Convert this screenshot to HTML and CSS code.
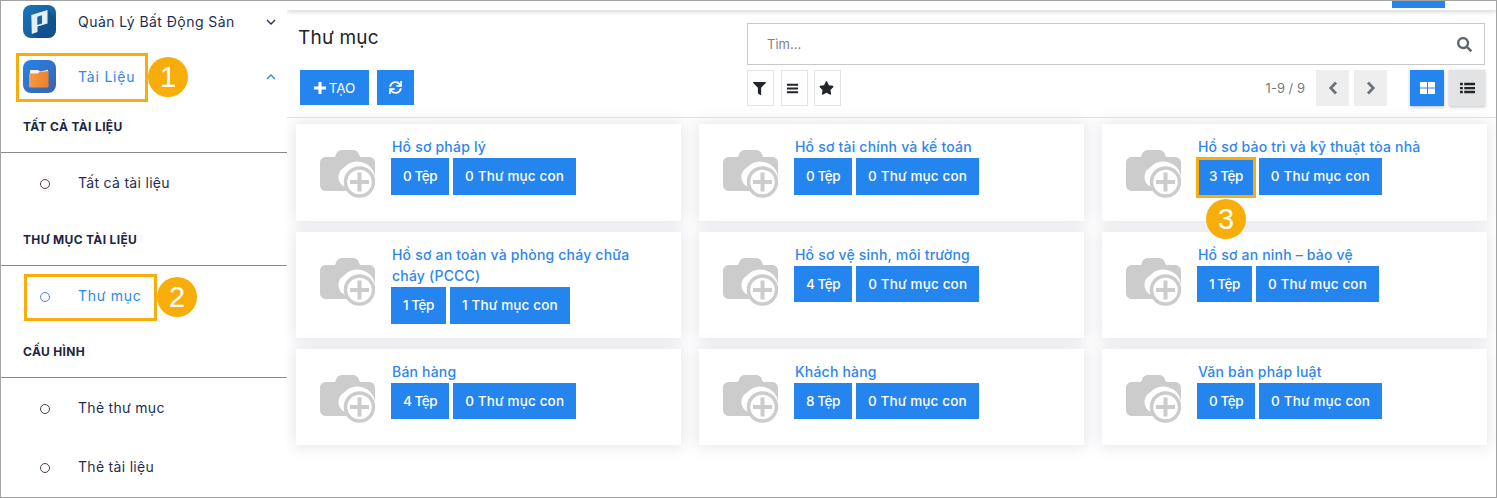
FILE: index.html
```html
<!DOCTYPE html>
<html lang="vi">
<head>
<meta charset="utf-8">
<title>Thư mục</title>
<link rel="stylesheet" href="styles.css">
</head>
<body>
<svg class="defs" width="0" height="0" aria-hidden="true">
  <symbol id="camera" viewBox="0 0 55 48">
    <path fill="#cccccc" d="M16 4.500C17 1.500 19 0 22 0h11c3 0 5 1.500 6 4.500L40 7h9c3.500 0 6 2.500 6 6v13a18 18 0 0 0-31-8.500A11 11 0 0 0 28.500 38a18 18 0 0 0 .3 3H6c-3.500 0-6-2.500-6-6V13c0-3.500 2.500-6 6-6h9z"/>
    <circle cx="39.500" cy="32" r="14" fill="#fff" stroke="#cccccc" stroke-width="3.500"/>
    <rect x="37.500" y="22.500" width="4" height="19" fill="#cccccc"/>
    <rect x="30" y="30" width="19" height="4" fill="#cccccc"/>
  </symbol>
  <symbol id="i-search" viewBox="0 0 512 512"><path d="M505 442.700L405.300 343c-4.500-4.500-10.600-7-17-7H372c27.600-35.300 44-79.700 44-128C416 93.100 322.900 0 208 0S0 93.100 0 208s93.100 208 208 208c48.300 0 92.700-16.400 128-44v16.300c0 6.400 2.500 12.500 7 17l99.700 99.700c9.400 9.400 24.600 9.400 33.900 0l28.300-28.300c9.400-9.400 9.400-24.600.1-34zM208 336c-70.700 0-128-57.200-128-128 0-70.700 57.200-128 128-128 70.700 0 128 57.200 128 128 0 70.700-57.200 128-128 128z"/></symbol>
  <symbol id="i-sync" viewBox="0 0 512 512"><path d="M440.650 12.570l4 82.770A247.160 247.160 0 0 0 255.830 8C134.730 8 33.910 94.920 12.290 209.820A12 12 0 0 0 24.090 224h49.050a12 12 0 0 0 11.670-9.260 175.910 175.910 0 0 1 317-56.940l-101.460-4.860a12 12 0 0 0-12.570 12v47.410a12 12 0 0 0 12 12H500a12 12 0 0 0 12-12V12a12 12 0 0 0-12-12h-47.370a12 12 0 0 0-11.980 12.570zM255.830 432a175.610 175.610 0 0 1-146-77.800l101.800 4.870a12 12 0 0 0 12.570-12v-47.400a12 12 0 0 0-12-12H12a12 12 0 0 0-12 12V500a12 12 0 0 0 12 12h47.350a12 12 0 0 0 12-12.600l-4.150-82.570A247.170 247.170 0 0 0 255.830 504c121.110 0 221.930-86.920 243.550-201.820a12 12 0 0 0-11.800-14.180h-49.050a12 12 0 0 0-11.670 9.260A175.860 175.860 0 0 1 255.830 432z"/></symbol>
  <symbol id="i-filter" viewBox="0 0 512 512"><path d="M487.976 0H24.028C2.710 0-8.047 25.866 7.058 40.971L192 225.941V432c0 7.831 3.821 15.170 10.237 19.662l80 55.980C298.020 518.690 320 507.493 320 487.980V225.941l184.947-184.970C520.021 25.896 509.338 0 487.976 0z"/></symbol>
  <symbol id="i-star" viewBox="0 0 576 512"><path d="M259.300 17.800L194 150.200 47.900 171.500c-26.200 3.800-36.700 36.100-17.700 54.600l105.700 103-25 145.500c-4.500 26.300 23.200 46 46.400 33.700L288 439.600l130.700 68.700c23.200 12.200 50.900-7.400 46.400-33.700l-25-145.500 105.700-103c19-18.500 8.500-50.800-17.700-54.600L382 150.200 316.700 17.800c-11.700-23.600-45.600-23.900-57.400 0z"/></symbol>
</svg>

<div class="frame">
  <aside class="sidebar">
    <a class="app">
      <svg class="app-icon" viewBox="0 0 33 33">
        <defs><linearGradient id="g1" x1="0" y1="0" x2="1" y2="1"><stop offset="0" stop-color="#1878bb"/><stop offset="1" stop-color="#12508e"/></linearGradient></defs>
        <rect width="33" height="33" rx="8" fill="url(#g1)"/>
        <path fill="#0f4a82" opacity=".55" d="M24.500 5L33 14v11a8 8 0 0 1-8 8H14L9 29l7-8 8-3z"/>
        <path fill="#e6eef5" fill-rule="evenodd" d="M8.300 10L24.500 5v13.500L14.500 21.500V27L8.800 29zM14.300 11.800V20L19 18.500V10.300z"/>
      </svg>
      <span class="app-label">Quản Lý Bất Động Sản</span>
      <svg class="chev" viewBox="0 0 10 6"><path d="M1 1l4 4 4-4" fill="none" stroke="#1f2d50" stroke-width="1.300"/></svg>
    </a>
    <a class="app app-active">
      <svg class="app-icon" viewBox="0 0 33 33">
        <defs>
          <linearGradient id="g2" x1="0" y1="0" x2="1" y2="1"><stop offset="0" stop-color="#2583ee"/><stop offset="1" stop-color="#3d62a6"/></linearGradient>
          <linearGradient id="g3" x1="0" y1="0" x2="1" y2="0"><stop offset="0" stop-color="#f59a45"/><stop offset="1" stop-color="#ee7f2e"/></linearGradient>
        </defs>
        <rect width="33" height="33" rx="8" fill="url(#g2)"/>
        <path fill="#f7f1e6" d="M7 12V10h8l2 1.500 8-1.700V14H7z"/>
        <path fill="url(#g3)" d="M6 13.500h8.500l2-1.500 9-1V26a1.500 1.500 0 0 1-1.500 1.500H7.500A1.500 1.500 0 0 1 6 26z"/>
      </svg>
      <span class="app-label">Tài Liệu</span>
      <svg class="chev" viewBox="0 0 10 6"><path d="M1 5l4-4 4 4" fill="none" stroke="#2e86ee" stroke-width="1.300"/></svg>
    </a>

    <h3 class="sec-title sec-first">TẤT CẢ TÀI LIỆU</h3>
    <a class="item"><i class="dot"></i>Tất cả tài liệu</a>

    <h3 class="sec-title">THƯ MỤC TÀI LIỆU</h3>
    <a class="item item-active"><i class="dot"></i>Thư mục</a>

    <h3 class="sec-title">CẤU HÌNH</h3>
    <a class="item"><i class="dot"></i>Thẻ thư mục</a>
    <a class="item"><i class="dot"></i>Thẻ tài liệu</a>
  </aside>

  <main class="main">
    <div class="topstrip"><span class="toptab"></span></div>
    <section class="panel">
      <h1 class="page-title">Thư mục</h1>
      <div class="search">
        <span class="search-ph">Tìm...</span>
        <svg class="search-icon"><use href="#i-search"/></svg>
      </div>
      <div class="actions">
        <button class="btn btn-create"><svg class="plus" viewBox="0 0 12 12"><path d="M4.500 0h3v4.500H12v3H7.500V12h-3V7.500H0v-3h4.500z"/></svg>TẠO</button>
        <button class="btn btn-sync"><svg class="sync"><use href="#i-sync"/></svg></button>
      </div>
      <div class="tools">
        <button class="tool"><svg class="ti"><use href="#i-filter"/></svg></button>
        <button class="tool"><svg class="ti" viewBox="0 0 14 12"><path d="M1 1h12v2H1zM1 5h12v2H1zM1 9h12v2H1z"/></svg></button>
        <button class="tool"><svg class="ti ti-star"><use href="#i-star"/></svg></button>
        <span class="pager-text">1-9 / 9</span>
        <button class="pager"><svg viewBox="0 0 10 14" class="pi"><path d="M8 1.500L2.800 7 8 12.500" fill="none" stroke="#6c757d" stroke-width="2.800"/></svg></button>
        <button class="pager"><svg viewBox="0 0 10 14" class="pi"><path d="M2 1.500L7.200 7 2 12.500" fill="none" stroke="#6c757d" stroke-width="2.800"/></svg></button>
        <button class="view view-on"><svg viewBox="0 0 15 12" class="vi"><path fill="#fff" d="M0 0h7v5.500H0zM8 0h7v5.500H8zM0 6.500h7V12H0zM8 6.500h7V12H8z"/></svg></button>
        <button class="view"><svg viewBox="0 0 16 12" class="vi"><path fill="#212529" d="M0 .500h3v2.500H0zM4.500 .500H16v2.500H4.500zM0 4.800h3v2.500H0zM4.500 4.800H16v2.500H4.500zM0 9h3v2.500H0zM4.500 9H16v2.500H4.500z"/></svg></button>
      </div>
    </section>

    <section class="cards">
      <article class="card"><svg class="thumb"><use href="#camera"/></svg><div class="card-body"><a class="card-title">Hồ sơ pháp lý</a><div class="card-btns"><span class="stat">0 Tệp</span><span class="stat">0 Thư mục con</span></div></div></article>
      <article class="card"><svg class="thumb"><use href="#camera"/></svg><div class="card-body"><a class="card-title">Hồ sơ tài chính và kế toán</a><div class="card-btns"><span class="stat">0 Tệp</span><span class="stat">0 Thư mục con</span></div></div></article>
      <article class="card"><svg class="thumb"><use href="#camera"/></svg><div class="card-body"><a class="card-title">Hồ sơ bảo trì và kỹ thuật tòa nhà</a><div class="card-btns"><span class="stat">3 Tệp</span><span class="stat">0 Thư mục con</span></div></div></article>
      <article class="card"><svg class="thumb"><use href="#camera"/></svg><div class="card-body"><a class="card-title">Hồ sơ an toàn và phòng cháy chữa cháy (PCCC)</a><div class="card-btns"><span class="stat">1 Tệp</span><span class="stat">1 Thư mục con</span></div></div></article>
      <article class="card"><svg class="thumb"><use href="#camera"/></svg><div class="card-body"><a class="card-title">Hồ sơ vệ sinh, môi trường</a><div class="card-btns"><span class="stat">4 Tệp</span><span class="stat">0 Thư mục con</span></div></div></article>
      <article class="card"><svg class="thumb"><use href="#camera"/></svg><div class="card-body"><a class="card-title">Hồ sơ an ninh – bảo vệ</a><div class="card-btns"><span class="stat">1 Tệp</span><span class="stat">0 Thư mục con</span></div></div></article>
      <article class="card"><svg class="thumb"><use href="#camera"/></svg><div class="card-body"><a class="card-title">Bán hàng</a><div class="card-btns"><span class="stat">4 Tệp</span><span class="stat">0 Thư mục con</span></div></div></article>
      <article class="card"><svg class="thumb"><use href="#camera"/></svg><div class="card-body"><a class="card-title">Khách hàng</a><div class="card-btns"><span class="stat">8 Tệp</span><span class="stat">0 Thư mục con</span></div></div></article>
      <article class="card"><svg class="thumb"><use href="#camera"/></svg><div class="card-body"><a class="card-title">Văn bản pháp luật</a><div class="card-btns"><span class="stat">0 Tệp</span><span class="stat">0 Thư mục con</span></div></div></article>
    </section>
  </main>

  <div class="mark mark-box mark-box-1"></div>
  <div class="mark mark-num mark-num-1">1</div>
  <div class="mark mark-box mark-box-2"></div>
  <div class="mark mark-num mark-num-2">2</div>
  <div class="mark mark-box mark-box-3"></div>
  <div class="mark mark-num mark-num-3">3</div>
</div>
</body>
</html>
```

FILE: styles.css
```css
* { box-sizing: border-box; }
html, body { margin: 0; padding: 0; background: #fff; }
body { font-family: Inter, "Liberation Sans", sans-serif; color: #212529; overflow: hidden; }
.defs { position: absolute; }
a { display: block; }
button { font-family: inherit; padding: 0; cursor: pointer; }

.frame {
  position: relative;
  width: 1497px;
  height: 498px;
  border: 1px solid #a3a3a3;
  display: flex;
  overflow: hidden;
  background: #fff;
}

/* Sidebar */
.sidebar {
  width: 286px;
  flex: none;
  background: #fff;
  position: relative;
  z-index: 2;
  margin-top: -7px;
}
.app {
  height: 55px;
  display: flex;
  align-items: center;
  padding-left: 22px;
  padding-right: 10px;
  font-size: 14px;
  color: #1f2d50;
}
.app-label { margin-left: 22px; flex: 1; letter-spacing: .45px; }
.app-active .app-label { letter-spacing: .8px; }
.app-icon { width: 33px; height: 33px; flex: none; }
.chev { width: 10px; height: 6px; margin-right: 1px; }
.app-active { color: #2e86ee; }
.sec-title {
  margin: 13.500px 0 0;
  height: 40px;
  line-height: 28px;
  padding: 0 0 0 22px;
  font-size: 12px;
  font-weight: 700;
  letter-spacing: .35px;
  color: #1c2541;
  border-bottom: 1px solid #8a8a8a;
}
.sec-first { margin-top: 9px; }
.item {
  height: 59px;
  display: flex;
  align-items: center;
  padding-left: 39px;
  font-size: 14px;
  color: #1f2d50;
  letter-spacing: .3px;
}
.dot {
  width: 10px;
  height: 10px;
  border: 1px solid #5a3b45;
  border-radius: 50%;
  margin: 3px 28px 0 0;
  flex: none;
}
.item-active { color: #2e86ee; letter-spacing: .7px; }
.item-active .dot { border-color: #5b7fe0; }

/* Main */
.main { flex: 1; min-width: 0; display: flex; flex-direction: column; background: #fff; }
.topstrip {
  height: 9px;
  flex: none;
  display: flex;
  justify-content: flex-end;
  padding-right: 51px;
  background: #fff;
  box-shadow: 0 2px 5px rgba(0,0,0,.16);
  position: relative;
}
.toptab { width: 53px; height: 7px; background: #2585ee; }

.panel {
  position: relative;
  display: grid;
  grid-template-columns: 449px 1fr;
  grid-template-rows: 42px 36px;
  row-gap: 5px;
  padding: 13px 11px 11px 11px;
  border-bottom: 1px solid #dedede;
  height: 108px;
  flex: none;
}
.page-title { margin: 0; font-size: 19px; font-weight: 400; line-height: 30px; color: #212529; letter-spacing: .2px; }
.search {
  border: 1px solid #c8c8c8;
  display: flex;
  align-items: center;
  justify-content: space-between;
  padding: 0 12px 0 19px;
  font-size: 13px;
  color: #7b8288;
}
.search-icon { width: 15px; height: 15px; fill: #5f666d; }
.actions { display: flex; gap: 8px; padding-left: 2px; }
.btn {
  height: 35px;
  background: #2585ee;
  color: #fff;
  border: 0;
  display: flex;
  align-items: center;
  justify-content: center;
  font-size: 13.500px;
}
.btn-create { width: 69px; gap: 3px; font-weight: 400; }
.btn-sync { width: 37px; }
.plus { width: 12px; height: 12px; fill: #fff; }
.sync { width: 13px; height: 13px; fill: #fff; }
.tools { display: flex; align-items: stretch; }
.tool {
  width: 27px;
  background: #fff;
  border: 1px solid #e3e3e3;
  margin-right: 6.500px;
  padding-right: 3px;
  display: flex;
  align-items: center;
  justify-content: center;
}
.ti { width: 13px; height: 13px; fill: #212529; }
.ti-star { width: 15px; height: 14px; }
.pager-text { margin-left: auto; align-self: center; font-size: 13px; color: #7b7b7b; margin-right: 11px; }
.pager {
  width: 33px;
  background: #eeeeee;
  border: 0;
  margin-right: 5px;
  display: flex;
  align-items: center;
  justify-content: center;
}
.pi { width: 10px; height: 14px; }
.view {
  width: 36px;
  border: 0;
  background: #e2e3e5;
  box-shadow: 0 1px 3px rgba(0,0,0,.25);
  display: flex;
  align-items: center;
  justify-content: center;
  margin-left: 5px;
}
.view-on { width: 34px; background: #2585ee; margin-left: 18px; }
.vi { width: 15px; height: 12px; }

/* Cards */
.cards {
  display: grid;
  grid-template-columns: repeat(3, 385px);
  column-gap: 18px;
  row-gap: 11px;
  padding: 6px 0 0 9px;
  align-content: start;
  align-items: stretch;
}
.card {
  min-height: 96.500px;
  background: #fff;
  box-shadow: 0 0 14px 2px rgba(75,85,110,.14);
  display: flex;
  padding: 12px 13px 14px 24px;
}
.thumb { width: 55px; height: 48px; margin-top: 14px; margin-right: 16px; flex: none; }
.card-body { flex: 1; min-width: 0; }
.card-title { font-size: 14px; line-height: 21.500px; color: #2e86ee; font-weight: 500; letter-spacing: .2px; max-width: 260px; padding-left: 1px; }
.card-btns { display: flex; gap: 4px; margin-top: .500px; }
.stat {
  height: 36.500px;
  padding: 0 12px;
  display: flex;
  align-items: center;
  background: #2585ee;
  color: #fff;
  font-size: 13.500px;
  font-weight: 500;
  letter-spacing: .15px;
  white-space: nowrap;
}
.stat:first-child { letter-spacing: -.45px; }

/* Annotations laid over the page */
.mark { position: absolute; z-index: 5; }
.mark-box { border: 3px solid #f8ae0a; }
.mark-box-1 { left: 15px; top: 52px; width: 132px; height: 49px; }
.mark-box-2 { left: 23px; top: 273px; width: 133px; height: 47px; }
.mark-box-3 { left: 1195px; top: 156px; width: 60px; height: 41px; }
.mark-num {
  width: 40px;
  height: 40px;
  border-radius: 50%;
  background: #f8ae0a;
  color: #fff;
  font-family: "Liberation Sans", Arial, sans-serif;
  font-size: 29px;
  line-height: 40px;
  text-align: center;
}
.mark-num-1 { left: 147px; top: 56px; }
.mark-num-2 { left: 156px; top: 276px; }
.mark-num-3 { left: 1205px; top: 198px; }
```
